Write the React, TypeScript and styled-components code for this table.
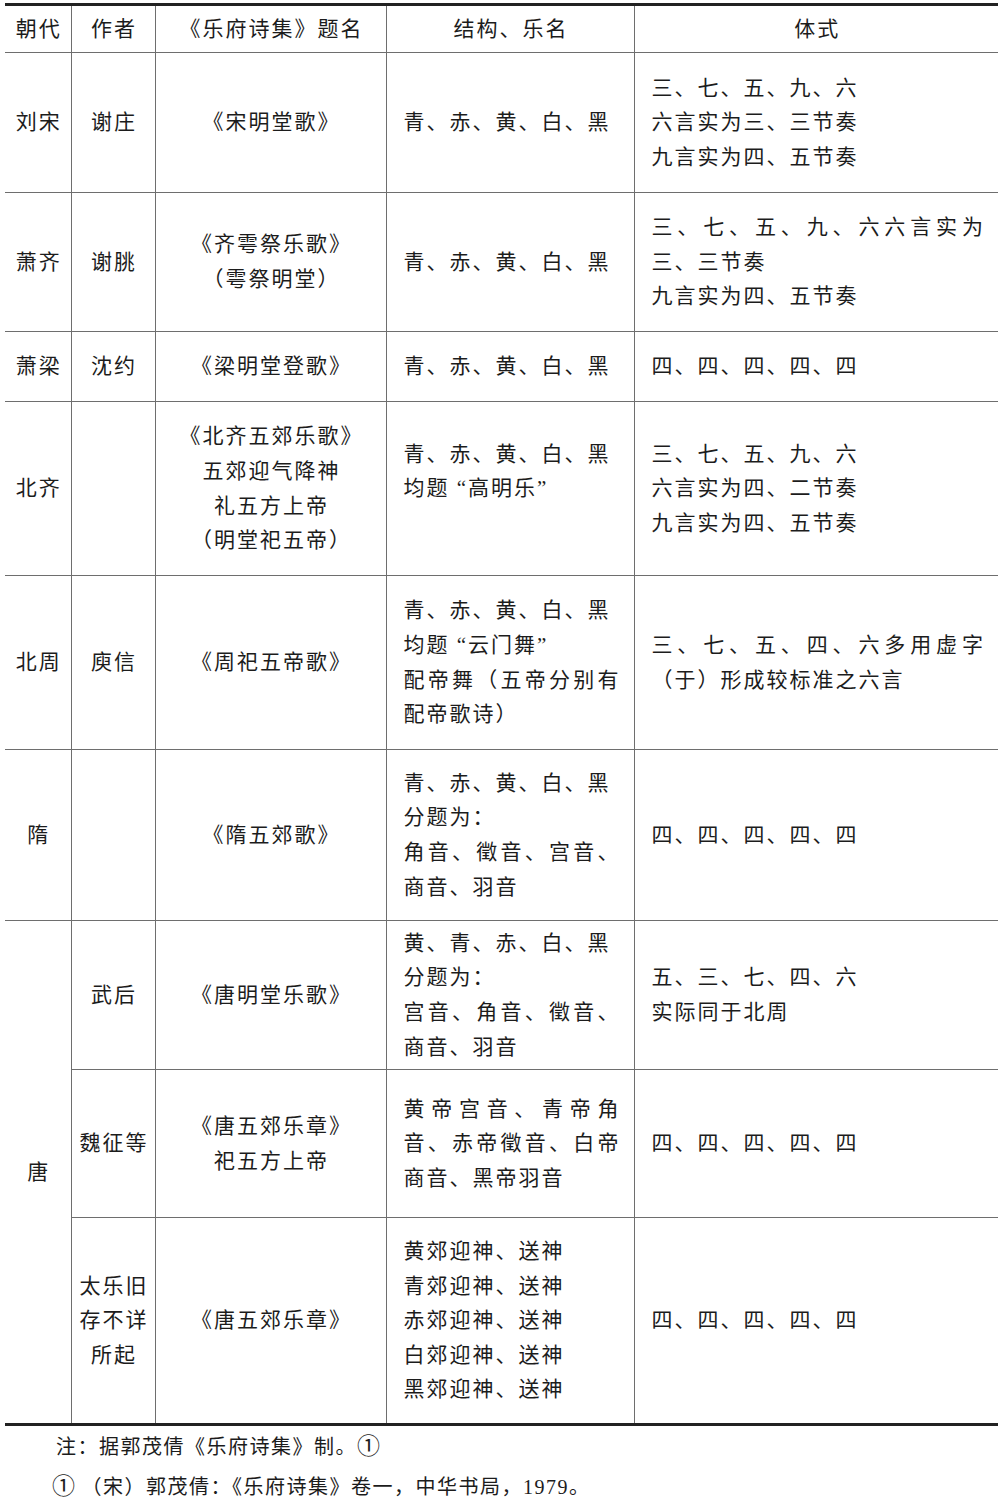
import React from "react";
import styled, { createGlobalStyle } from "styled-components";

const GlobalStyle = createGlobalStyle`
  html, body {
    margin: 0;
    padding: 0;
    background: #ffffff;
  }
  body {
    font-family: "Liberation Serif", "Noto Sans CJK SC", serif;
    color: #1c1c1c;
  }
`;

const Page = styled.div`
  width: 993px;
  padding: 3px 5px 0 5px;
`;

const Table = styled.table`
  width: 993px;
  table-layout: fixed;
  border-collapse: collapse;
  border-top: 3px solid #222;
  border-bottom: 3px solid #222;
  font-size: 21px;
  letter-spacing: 2px;
`;

const Row = styled.tr<{ $h: number }>`
  height: ${(p) => p.$h}px;
`;

const Cell = styled.td<{ $align?: "center" | "left"; $last?: boolean }>`
  padding: ${(p) => (p.$align === "left" ? "0 13px 0 17px" : "0 2px 0 4px")};
  text-align: ${(p) => (p.$align === "left" ? "left" : "center")};
  vertical-align: middle;
  line-height: 34.6px;
  border-bottom: 1px solid #6e6e6e;
  border-right: ${(p) => (p.$last ? "none" : "1px solid #6e6e6e")};
  white-space: nowrap;
`;

const HeadCell = styled(Cell).attrs({ as: "th" })`
  font-weight: 400;
`;

const Line = styled.div<{ $justify?: boolean }>`
  display: block;
  text-align: ${(p) => (p.$justify ? "justify" : "inherit")};
  text-align-last: ${(p) => (p.$justify ? "justify" : "auto")};
`;

const Notes = styled.div`
  padding: 1px 0 0 47px;
  font-size: 20px;
  line-height: 40px;
  letter-spacing: 1.5px;
`;

const NoteLine = styled.div<{ $indent?: number }>`
  padding-left: ${(p) => p.$indent ?? 0}px;
`;

const Circled = styled.span`
  font-size: 23px;
  letter-spacing: 0;
`;

type L = string | { t: string; j: true };
const J = (t: string): L => ({ t, j: true });

type RowData = {
  h: number;
  dyn?: string;
  span?: number;
  skipDyn?: boolean;
  author: string[];
  title: string[];
  struct: L[];
  form: L[];
};

const rows: RowData[] = [
  {
    h: 140,
    dyn: "刘宋",
    author: ["谢庄"],
    title: ["《宋明堂歌》"],
    struct: ["青、赤、黄、白、黑"],
    form: ["三、七、五、九、六", "六言实为三、三节奏", "九言实为四、五节奏"],
  },
  {
    h: 139,
    dyn: "萧齐",
    author: ["谢朓"],
    title: ["《齐雩祭乐歌》", "（雩祭明堂）"],
    struct: ["青、赤、黄、白、黑"],
    form: [J("三、七、五、九、六六言实为"), "三、三节奏", "九言实为四、五节奏"],
  },
  {
    h: 70,
    dyn: "萧梁",
    author: ["沈约"],
    title: ["《梁明堂登歌》"],
    struct: ["青、赤、黄、白、黑"],
    form: ["四、四、四、四、四"],
  },
  {
    h: 174,
    dyn: "北齐",
    author: [],
    title: ["《北齐五郊乐歌》", "五郊迎气降神", "礼五方上帝", "（明堂祀五帝）"],
    struct: ["青、赤、黄、白、黑", "均题 “高明乐”", "\u00a0"],
    form: ["三、七、五、九、六", "六言实为四、二节奏", "九言实为四、五节奏"],
  },
  {
    h: 174,
    dyn: "北周",
    author: ["庾信"],
    title: ["《周祀五帝歌》"],
    struct: ["青、赤、黄、白、黑", "均题 “云门舞”", J("配帝舞（五帝分别有"), "配帝歌诗）"],
    form: [J("三、七、五、四、六多用虚字"), "（于）形成较标准之六言"],
  },
  {
    h: 171,
    dyn: "隋",
    author: [],
    title: ["《隋五郊歌》"],
    struct: ["青、赤、黄、白、黑", "分题为：", J("角音、徵音、宫音、"), "商音、羽音"],
    form: ["四、四、四、四、四"],
  },
  {
    h: 149,
    dyn: "唐",
    span: 3,
    author: ["武后"],
    title: ["《唐明堂乐歌》"],
    struct: ["黄、青、赤、白、黑", "分题为：", J("宫音、角音、徵音、"), "商音、羽音"],
    form: ["五、三、七、四、六", "实际同于北周"],
  },
  {
    h: 148,
    skipDyn: true,
    author: ["魏征等"],
    title: ["《唐五郊乐章》", "祀五方上帝"],
    struct: [J("黄帝宫音、青帝角"), J("音、赤帝徵音、白帝"), "商音、黑帝羽音"],
    form: ["四、四、四、四、四"],
  },
  {
    h: 207,
    skipDyn: true,
    author: ["太乐旧", "存不详", "所起"],
    title: ["《唐五郊乐章》"],
    struct: [
      "黄郊迎神、送神",
      "青郊迎神、送神",
      "赤郊迎神、送神",
      "白郊迎神、送神",
      "黑郊迎神、送神",
    ],
    form: ["四、四、四、四、四"],
  },
];

const Lines: React.FC<{ items: L[] }> = ({ items }) => (
  <>
    {items.map((it, i) =>
      typeof it === "string" ? (
        <Line key={i}>{it}</Line>
      ) : (
        <Line key={i} $justify>
          {it.t}
        </Line>
      )
    )}
  </>
);

export default function App() {
  return (
    <>
      <GlobalStyle />
      <Page lang="zh-CN">
        <Table>
          <colgroup>
            <col style={{ width: 66 }} />
            <col style={{ width: 84 }} />
            <col style={{ width: 231 }} />
            <col style={{ width: 248 }} />
            <col style={{ width: 364 }} />
          </colgroup>
          <thead>
            <Row $h={48}>
              <HeadCell>朝代</HeadCell>
              <HeadCell>作者</HeadCell>
              <HeadCell>《乐府诗集》题名</HeadCell>
              <HeadCell>结构、乐名</HeadCell>
              <HeadCell $last>体式</HeadCell>
            </Row>
          </thead>
          <tbody>
            {rows.map((r, i) => (
              <Row key={i} $h={r.h}>
                {!r.skipDyn && <Cell rowSpan={r.span ?? 1}>{r.dyn}</Cell>}
                <Cell>
                  <Lines items={r.author} />
                </Cell>
                <Cell>
                  <Lines items={r.title} />
                </Cell>
                <Cell $align="left">
                  <Lines items={r.struct} />
                </Cell>
                <Cell $align="left" $last>
                  <Lines items={r.form} />
                </Cell>
              </Row>
            ))}
          </tbody>
        </Table>
        <Notes>
          <NoteLine $indent={4}>
            注：据郭茂倩《乐府诗集》制。<Circled>①</Circled>
          </NoteLine>
          <NoteLine>
            <Circled>①</Circled> （宋）郭茂倩：《乐府诗集》卷一，中华书局，1979。
          </NoteLine>
        </Notes>
      </Page>
    </>
  );
}
